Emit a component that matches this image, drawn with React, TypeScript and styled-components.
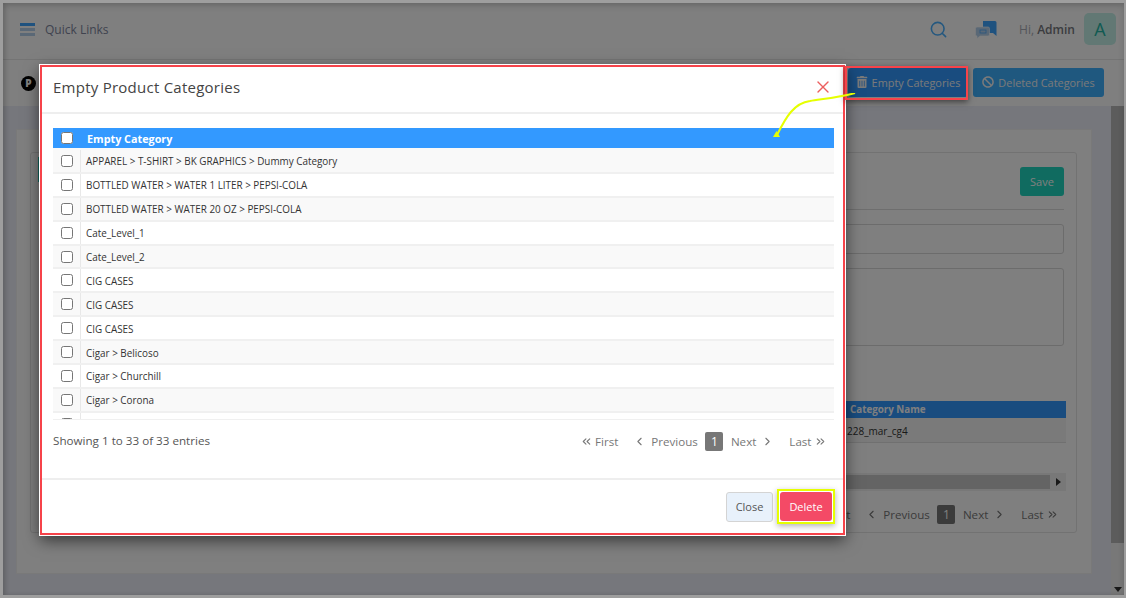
import React from 'react';
import styled, { createGlobalStyle } from 'styled-components';
import { ChevronLeft, ChevronRight, ChevronsLeft, ChevronsRight, Search, X } from 'lucide-react';
import { FaBan, FaTrashAlt } from 'react-icons/fa';

const categories = [
    'APPAREL > T-SHIRT > BK GRAPHICS > Dummy Category',
    'BOTTLED WATER > WATER 1 LITER > PEPSI-COLA',
    'BOTTLED WATER > WATER 20 OZ > PEPSI-COLA',
    'Cate_Level_1',
    'Cate_Level_2',
    'CIG CASES',
    'CIG CASES',
    'CIG CASES',
    'Cigar > Belicoso',
    'Cigar > Churchill',
    'Cigar > Corona',
    '',
];

const Pager = () => (
    <PagerRow>
        <PageLink><ChevronsLeft size={13} />First</PageLink>
        <PageLink><ChevronLeft size={13} />&nbsp;Previous</PageLink>
        <PageCurrent>1</PageCurrent>
        <PageLink>Next&nbsp;<ChevronRight size={13} /></PageLink>
        <PageLink>Last<ChevronsRight size={13} /></PageLink>
    </PagerRow>
);

const App = () => {
    return (
        <Frame>
            <GlobalStyle />
            <Page>
                <Header>
                    <MenuIcon>
                        <MenuBar $first />
                        <MenuBar />
                        <MenuBar />
                    </MenuIcon>
                    <QuickLinks>Quick Links</QuickLinks>
                    <HeaderRight>
                        <Search size={19} color="#4ab0ff" strokeWidth={2} />
                        <svg width="22" height="19" viewBox="0 0 22 19">
                            <path d="M8 1h12a1.5 1.5 0 0 1 1.5 1.5V16l-3.5-3H8z" fill="#3fa4ff" />
                            <path d="M2 7h11a1.5 1.5 0 0 1 1.5 1.5v6a1.5 1.5 0 0 1-1.5 1.5H5l-3 2.5V16a1.5 1.5 0 0 1-1.5-1.5v-6A1.5 1.5 0 0 1 2 7z" fill="#b4d0ec" stroke="#fff" strokeWidth="0.6" />
                            <rect x="5" y="10" width="6" height="3" fill="none" stroke="#3fa4ff" strokeWidth="0.7" />
                        </svg>
                        <Greeting>Hi, <strong>Admin</strong></Greeting>
                        <Avatar>A</Avatar>
                    </HeaderRight>
                </Header>
                <SubHeader>
                    <PageBadge>P</PageBadge>
                    <SubActions>
                        <ActionButton $width={120}><FaTrashAlt size={12} />Empty Categories</ActionButton>
                        <ActionButton $width={131} $bright><FaBan size={12} />Deleted Categories</ActionButton>
                    </SubActions>
                </SubHeader>
                <Content>
                    <Main>
                        <Card>
                            <Panel>
                                <LeftTab />
                                <SaveRow>
                                    <SaveButton>Save</SaveButton>
                                </SaveRow>
                                <FakeInput />
                                <FakeTextarea />
                                <BackTable>
                                    <BackHead>Category Name</BackHead>
                                    <BackCell>228_mar_cg4</BackCell>
                                </BackTable>
                                <HScroll>
                                    <HThumb />
                                    <HArrow />
                                </HScroll>
                                <BackPager>
                                    <Pager />
                                </BackPager>
                            </Panel>
                        </Card>
                    </Main>
                    <ScrollTrack>
                        <ScrollThumb />
                        <ScrollArrow />
                    </ScrollTrack>
                </Content>
            </Page>
            <Backdrop />
            <Modal>
                <ModalHeader>
                    <ModalTitle>Empty Product Categories</ModalTitle>
                    <X size={20} color="#ec5f5f" strokeWidth={1.6} />
                </ModalHeader>
                <ModalBody>
                    <TableHead>
                        <CheckCell><input type="checkbox" /></CheckCell>
                        <HeadLabel>Empty Category</HeadLabel>
                    </TableHead>
                    <TableRows>
                        {categories.map((name, i) => (
                            <TableRow key={i} $odd={i % 2 === 0}>
                                <CheckCell $line><input type="checkbox" /></CheckCell>
                                <RowLabel>{name}</RowLabel>
                            </TableRow>
                        ))}
                    </TableRows>
                    <InfoRow>
                        <Info>Showing 1 to 33 of 33 entries</Info>
                        <Pager />
                    </InfoRow>
                </ModalBody>
                <ModalFooter>
                    <CloseButton>Close</CloseButton>
                    <DeleteMark>
                        <DeleteButton>Delete</DeleteButton>
                    </DeleteMark>
                </ModalFooter>
            </Modal>
            <RedMark />
            <Arrow width="90" height="50" viewBox="0 0 90 50">
                <path d="M83 0C70 4 50 6 38 8C22 10 14 24 5 42" fill="none" stroke="#e6ff00" strokeWidth="2" />
                <path d="M1 44L8 44L4.5 38z" fill="#e6ff00" />
            </Arrow>
        </Frame>
    );
};

export default App;

const GlobalStyle = createGlobalStyle`
    html, body {
        margin: 0;
        padding: 0;
        overflow: hidden;
    }
    body {
        font-family: "Open Sans", "Liberation Sans", sans-serif;
    }
    * {
        box-sizing: border-box;
    }
`;

const Frame = styled.div`
    position: relative;
    width: 1126px;
    height: 598px;
    padding: 3px 2px 3px 3px;
    background: #9e9e9e;
    overflow: hidden;
`;

const Page = styled.div`
    display: flex;
    flex-direction: column;
    height: 592px;
    background: #eceef8;
`;

const Header = styled.div`
    display: flex;
    align-items: center;
    flex: 0 0 57px;
    padding: 0 8px 4px 17px;
    background: #fff;
    border-bottom: 1px solid #e8e8e8;
`;

const MenuIcon = styled.div`
    display: flex;
    flex-direction: column;
    gap: 2px;
    width: 15px;
`;

const MenuBar = styled.span<{ $first?: boolean }>`
    height: 3px;
    background: ${(p) => (p.$first ? '#3fa4ff' : '#b4d0ec')};
`;

const QuickLinks = styled.div`
    margin-left: 10px;
    font-size: 12px;
    color: #80869e;
`;

const HeaderRight = styled.div`
    display: flex;
    align-items: center;
    margin-left: auto;

    > svg:first-child {
        margin-right: 27px;
    }
`;

const Greeting = styled.div`
    margin-left: 22px;
    font-size: 12px;
    color: #a8abb4;

    strong {
        font-weight: 600;
        color: #77797e;
    }
`;

const Avatar = styled.div`
    display: flex;
    align-items: center;
    justify-content: center;
    width: 32px;
    height: 32px;
    margin-left: 9px;
    border-radius: 5px;
    background: #c4f0e8;
    color: #22b5a4;
    font-size: 18px;
`;

const SubHeader = styled.div`
    display: flex;
    align-items: center;
    flex: 0 0 46px;
    padding: 0 20px 2px 18px;
    background: #fff;
`;

const PageBadge = styled.div`
    display: flex;
    align-items: center;
    justify-content: center;
    width: 15px;
    height: 15px;
    margin-top: 2px;
    border-radius: 50%;
    background: #000;
    color: #fff;
    font-size: 10px;
    font-weight: 800;
`;

const SubActions = styled.div`
    display: flex;
    gap: 5px;
    margin-left: auto;
`;

const ActionButton = styled.div<{ $width: number; $bright?: boolean }>`
    display: flex;
    align-items: center;
    justify-content: center;
    gap: 4px;
    width: ${(p) => p.$width}px;
    height: 29px;
    border-radius: 3px;
    background: ${(p) => (p.$bright ? '#3eb0ff' : '#3399ff')};
    color: #f4f4f4;
    font-size: 10.9px;
    white-space: nowrap;
`;

const Content = styled.div`
    display: flex;
    flex: 1;
    min-height: 0;
`;

const Main = styled.div`
    flex: 1;
    padding: 23px 19px 0 13px;
`;

const Card = styled.div`
    height: 445px;
    padding: 22px 14px 40px 13px;
    background: #fff;
    border: 1px solid #f2f2f2;
`;

const Panel = styled.div`
    position: relative;
    height: 100%;
    padding: 14px 12px 0 12px;
    border: 1px solid #e4e4e4;
    border-radius: 3px;
`;

const LeftTab = styled.div`
    position: absolute;
    top: 4px;
    left: 7px;
    width: 6px;
    height: 25px;
    background: #20cbb8;
`;

const SaveRow = styled.div`
    display: flex;
    justify-content: flex-end;
    padding-bottom: 13px;
    border-bottom: 1px solid #dcdcdc;
`;

const SaveButton = styled.div`
    display: flex;
    align-items: center;
    justify-content: center;
    width: 44px;
    height: 29px;
    border-radius: 3px;
    background: #20d6c0;
    color: #fff;
    font-size: 11px;
`;

const FakeInput = styled.div`
    height: 30px;
    margin-top: 14px;
    border: 1px solid #d8d8d8;
    border-radius: 3px;
`;

const FakeTextarea = styled(FakeInput)`
    height: 78px;
`;

const BackTable = styled.div`
    margin: 55px -2px 0 0;
`;

const BackHead = styled.div`
    height: 17px;
    padding-left: 807px;
    background: #3399ff;
    color: #fff;
    font-size: 9.8px;
    font-weight: 700;
    line-height: 17px;
    white-space: nowrap;
`;

const BackCell = styled.div`
    height: 25px;
    padding-left: 804px;
    background: #f4f4f4;
    border-bottom: 1px solid #e0e0e0;
    color: #333;
    font-size: 10px;
    line-height: 27px;
    white-space: nowrap;
`;

const HScroll = styled.div`
    display: flex;
    align-items: center;
    height: 18px;
    margin: 30px -2px 0 0;
    background: #f1f1f1;
`;

const HThumb = styled.div`
    flex: 1;
    height: 14px;
    background: #c8c8c8;
`;

const HArrow = styled.div`
    width: 0;
    height: 0;
    margin: 0 5px 0 6px;
    border-top: 4px solid transparent;
    border-bottom: 4px solid transparent;
    border-left: 5px solid #333;
`;

const BackPager = styled.div`
    display: flex;
    justify-content: flex-end;
    margin: 14px -2px 0 0;
`;

const ScrollTrack = styled.div`
    position: relative;
    flex: 0 0 13px;
    background: #f1f1f1;
`;

const ScrollThumb = styled.div`
    height: 437px;
    background: #b8b8b8;
`;

const ScrollArrow = styled.div`
    position: absolute;
    bottom: 3px;
    left: 3px;
    width: 0;
    height: 0;
    border-left: 4px solid transparent;
    border-right: 4px solid transparent;
    border-top: 5px solid #333;
`;

const Backdrop = styled.div`
    position: absolute;
    top: 3px;
    left: 3px;
    right: 2px;
    bottom: 3px;
    background: rgba(0, 0, 0, 0.5);
    box-shadow: inset 0 3px 6px rgba(0, 0, 0, 0.15), inset 3px 0 4px rgba(0, 0, 0, 0.1);
`;

const Modal = styled.div`
    position: absolute;
    top: 65px;
    left: 40px;
    display: flex;
    flex-direction: column;
    width: 805px;
    height: 470px;
    background: #fff;
    border: 2px solid #f6434a;
    outline: 1px solid #fff;
    box-shadow: 0 5px 15px rgba(0, 0, 0, 0.6);
`;

const ModalHeader = styled.div`
    display: flex;
    align-items: center;
    justify-content: space-between;
    flex: 0 0 47px;
    padding: 0 10px 5px 11px;
    border-bottom: 2px solid #eeeeee;
`;

const ModalTitle = styled.div`
    font-size: 15px;
    letter-spacing: 0.25px;
    color: #444;
`;

const ModalBody = styled.div`
    display: flex;
    flex-direction: column;
    flex: 0 0 366px;
    padding: 14px 9px 0 11px;
    border-bottom: 2px solid #eeeeee;
`;

const TableHead = styled.div`
    display: flex;
    align-items: center;
    height: 20px;
    background: #3399ff;
`;

const CheckCell = styled.div<{ $line?: boolean }>`
    display: flex;
    align-items: center;
    justify-content: center;
    flex: 0 0 28px;
    align-self: stretch;
    border-right: ${(p) => (p.$line ? '1px solid #e8e8e8' : 'none')};

    input {
        width: 12px;
        height: 12px;
        margin: 0;
    }
`;

const HeadLabel = styled.div`
    margin-left: 6px;
    font-size: 10.8px;
    font-weight: 700;
    color: #fff;
`;

const TableRows = styled.div`
    flex: 0 0 271px;
    height: 271px;
    padding-top: 2px;
    background: #f9f9f9;
    overflow: hidden;
`;

const TableRow = styled.div<{ $odd: boolean }>`
    display: flex;
    align-items: center;
    height: 23.9px;
    background: ${(p) => (p.$odd ? '#f9f9f9' : '#fff')};
    border-bottom: 2px solid #f0f0f0;
`;

const RowLabel = styled.div`
    margin: 1px 0 0 5px;
    font-size: 9.9px;
    color: #333;
`;

const InfoRow = styled.div`
    display: flex;
    align-items: center;
    justify-content: space-between;
    padding: 12px 0 0 0;
    border-top: 1px solid #f0f0f0;
`;

const Info = styled.div`
    margin-bottom: 2px;
    font-size: 11.65px;
    color: #555;
`;

const PagerRow = styled.div`
    display: flex;
    align-items: center;
    height: 19px;
`;

const PageLink = styled.div`
    display: flex;
    align-items: center;
    gap: 2px;
    padding: 0 7.5px;
    font-size: 11.6px;
    color: #777;
    white-space: nowrap;
`;

const PageCurrent = styled.div`
    display: flex;
    align-items: center;
    justify-content: center;
    width: 18px;
    height: 19px;
    border-radius: 2px;
    background: #777;
    color: #fff;
    font-size: 12px;
`;

const ModalFooter = styled.div`
    display: flex;
    align-items: center;
    justify-content: flex-end;
    flex: 1;
    gap: 4px;
    padding-right: 8px;
`;

const CloseButton = styled.div`
    display: flex;
    align-items: center;
    justify-content: center;
    width: 47px;
    height: 30px;
    border: 1px solid #d4d4d4;
    border-radius: 3px;
    background: #e8f1fb;
    color: #555;
    font-size: 11px;
`;

const DeleteMark = styled.div`
    padding: 1px;
    border: 2px solid #e6ff00;
    box-shadow: 0 2px 6px rgba(0, 0, 0, 0.3);
`;

const DeleteButton = styled.div`
    display: flex;
    align-items: center;
    justify-content: center;
    width: 52px;
    height: 29px;
    border-radius: 3px;
    background: #f44a66;
    color: #fff;
    font-size: 11px;
`;

const RedMark = styled.div`
    position: absolute;
    top: 66px;
    left: 845px;
    width: 123px;
    height: 34px;
    border: 2px solid #f6434a;
    box-shadow: 0 2px 6px rgba(0, 0, 0, 0.5);
`;

const Arrow = styled.svg`
    position: absolute;
    top: 93px;
    left: 772px;
`;
